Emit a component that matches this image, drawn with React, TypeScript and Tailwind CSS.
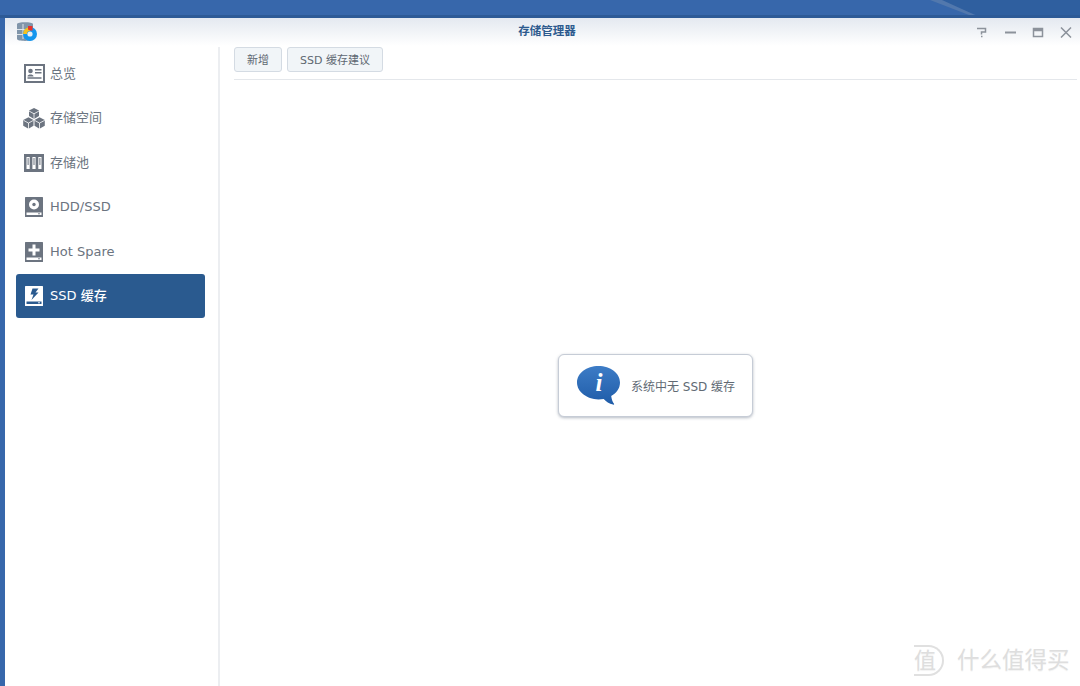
import type { ReactNode } from 'react'

const font = 'font-["DejaVu_Sans","Noto_Sans_CJK_SC",sans-serif]'

function OverviewIcon() {
  return (
    <svg width="21" height="19" viewBox="0 0 21 19">
      <path fillRule="evenodd" fill="#6c7480" d="M0 0h21v19H0zM2 2v15h17V2z" />
      <circle cx="6.500" cy="7" r="2.300" fill="#6c7480" />
      <path d="M3.500 12.500c0-2.600 6-2.600 6 0zM11 5h6.500v1.600H11zM11 8h6.500v1.600H11zM3.500 13.200h14v1.500h-14z" fill="#6c7480" />
    </svg>
  )
}

function CubesIcon() {
  return (
    <svg width="22" height="21" viewBox="0 0 22 21">
      <path fill="#6c7480" d="M11 0l5 2.600v5.500L11 11 6 8.100V2.600z" />
      <path fill="#6c7480" d="M5.500 9.200l5 2.800v5.700l-5 3-5.300-3V12zM16.500 9.200l5.300 2.800v5.700l-5.300 3-5-3V12z" />
      <path stroke="#fff" strokeWidth="0.800" fill="none" d="M6 3l5 2.800L16 3M11 5.800V11M.5 12.300l5 2.800 5-2.800M5.500 15v6M11.500 12.300l5 2.800 5.300-2.800M16.500 15v6" />
    </svg>
  )
}

function PoolIcon() {
  return (
    <svg width="20" height="18" viewBox="0 0 20 18">
      <path fill="#6c7480" d="M0 0h20v18H0z" />
      <path fill="#fff" d="M2.500 3h3.200v12H2.500zM8.400 3h3.200v12H8.400zM14.300 3h3.200v12h-3.200z" />
      <path fill="#6c7480" d="M3.600 4v7h1V4zM9.500 4v7h1V4zM15.400 4v7h1V4z" />
    </svg>
  )
}

function DiskIcon({ children, fill = '#6c7480', ink = '#fff' }: { children: ReactNode; fill?: string; ink?: string }) {
  return (
    <svg width="18" height="20" viewBox="0 0 18 20">
      <rect width="18" height="20" rx="0.500" fill={fill} />
      <path fill={ink} d="M1.500 15.500h15v2.500h-15z" />
      <circle cx="14" cy="16.700" r="0.800" fill={fill} />
      {children}
    </svg>
  )
}

function InfoBubble() {
  return (
    <svg width="44" height="39" viewBox="0 0 44 39">
      <defs>
        <linearGradient id="bubble" x1="0" y1="0" x2="0" y2="1">
          <stop offset="0" stopColor="#3d7cc6" />
          <stop offset="1" stopColor="#1f5ca8" />
        </linearGradient>
      </defs>
      <path
        fill="url(#bubble)"
        d="M21.500 0C33.500 0 43 7.200 43 16.500c0 5.800-3.400 10.500-8.800 13.400.3 2.800 1.300 5.800 2.800 7.800.4.800-.2 1.100-1 .9-3.600-.8-7.200-3-9.300-5.600-1.700.3-3.300.5-5.200.5C9.500 33 0 25.700 0 16.500S9.500 0 21.500 0z"
      />
      <text x="22" y="25" textAnchor="middle" fill="#fff" fontSize="25" fontWeight="700" fontStyle="italic" fontFamily="Liberation Serif, serif">
        i
      </text>
    </svg>
  )
}

function AppLogo() {
  return (
    <svg width="22" height="20" viewBox="0 0 22 20">
      <path fill="#8095aa" d="M1 2c0-2.500 16-2.500 16 0v15c0 2.500-16 2.500-16 0z" />
      <path stroke="#dfe5ea" strokeWidth="1" fill="none" d="M1 7.500h14M1 12.500h10M7 2v15" />
      <circle cx="14" cy="12" r="7" fill="#1496ee" />
      <path fill="#f4c020" d="M14 5a7 7 0 0 0-7 7h4a3 3 0 0 1 3-3z" />
      <path fill="#e5322d" d="M12 4h4.500v4.500H14l-2-1z" />
      <circle cx="14" cy="12" r="2.600" fill="#e8eef4" />
    </svg>
  )
}

const items: { label: string; icon: ReactNode; active?: boolean }[] = [
  { label: '总览', icon: <OverviewIcon /> },
  { label: '存储空间', icon: <CubesIcon /> },
  { label: '存储池', icon: <PoolIcon /> },
  {
    label: 'HDD/SSD',
    icon: (
      <DiskIcon>
        <circle cx="9" cy="7.500" r="5" fill="#fff" />
        <circle cx="9" cy="7.500" r="1.700" fill="#6c7480" />
      </DiskIcon>
    ),
  },
  {
    label: 'Hot Spare',
    icon: (
      <DiskIcon>
        <path fill="#fff" d="M7.500 2.500h3v4h4v3h-4v4h-3v-4h-4v-3h4z" />
      </DiskIcon>
    ),
  },
  {
    label: 'SSD 缓存',
    active: true,
    icon: (
      <DiskIcon fill="#fff" ink="#2a5a8f">
        <path fill="#2a5a8f" d="M7.500 2.500h6l-3 4h3l-7 7.500 2-5.500H5.500z" />
      </DiskIcon>
    ),
  },
]

export default function App() {
  return (
    <div className={`relative h-[686px] w-[1080px] overflow-hidden bg-[#3767ab] pl-[5px] pt-[18px] ${font}`}>
      {/* wallpaper streak */}
      <svg className="absolute left-[900px] top-0" width="180" height="18" viewBox="0 0 180 18">
        <path d="M38 0h142v15H76z" fill="#2f5f9f" />
        <path d="M30 0h12l33 15h-6z" fill="#5278ad" />
        <path d="M0 15h180v3H0z" fill="#2d5a96" />
      </svg>
      <div className="absolute left-0 top-[15px] h-[3px] w-[900px] bg-[#2d5a96]" />

      <div className="relative flex h-[668px] w-[1075px] flex-col bg-white">
        <div className="relative flex h-[28px] shrink-0 items-center justify-center bg-gradient-to-b from-[#e4e9f0] to-white pl-[9px]">
          <div className="absolute left-[11px] top-[4px]">
            <AppLogo />
          </div>
          <span className="text-[11.500px] font-bold text-[#2d5a8e]">存储管理器</span>
          <div className="absolute right-[7px] top-[9px] flex items-center gap-[14px]">
            <svg width="14" height="11" viewBox="0 0 14 11" fill="none" stroke="#8c929b" strokeWidth="1.500">
              <path d="M2 1.500h8.500v3.500H6.500v2.500M6 9.500h1.500" />
            </svg>
            <svg width="14" height="11" viewBox="0 0 14 11" fill="none" stroke="#8c929b" strokeWidth="2">
              <path d="M2 5.500h11" />
            </svg>
            <svg width="14" height="11" viewBox="0 0 14 11" fill="none" stroke="#8c929b" strokeWidth="1.500">
              <path d="M2.500 1.500h9v8h-9z" />
              <path d="M2.500 3h9" strokeWidth="2.500" />
            </svg>
            <svg width="14" height="11" viewBox="0 0 14 11" fill="none" stroke="#8c929b" strokeWidth="1.500">
              <path d="M2 0.500l10 10M12 0.500l-10 10" />
            </svg>
          </div>
        </div>

        <div className="flex min-h-0 flex-1">
          <nav className="mt-[1px] flex w-[215px] shrink-0 flex-col gap-[0.500px] border-r-2 border-[#eceef1] pl-[11px] pr-[13px] pt-[4px]">
            {items.map((item) => (
              <div
                key={item.label}
                className={`flex h-[44px] shrink-0 items-center rounded-[3px] pt-[1px] text-[13px] ${
                  item.active ? 'bg-[#2a5a8f] font-medium text-white' : 'text-[#6b7480]'
                }`}
              >
                <span className="flex w-[34px] shrink-0 justify-center pl-[2px]">{item.icon}</span>
                {item.label}
              </div>
            ))}
          </nav>

          <main className="flex min-w-0 flex-1 flex-col pl-[14px] pr-[3px] pt-[1px]">
            <div className="flex shrink-0 gap-[5px] border-b border-[#e4e7eb] pb-[7px]">
              <button className="h-[25px] w-[48px] rounded-[3px] border border-[#d4dbe3] bg-[#f1f5f8] pt-[3px] text-[11px] text-[#5f6872]">
                新增
              </button>
              <button className="h-[25px] w-[96px] rounded-[3px] border border-[#d4dbe3] bg-[#f1f5f8] pt-[3px] text-[11px] text-[#5f6872]">
                SSD 缓存建议
              </button>
            </div>
            <div className="flex flex-1 items-start justify-center pt-[274px]">
              <div className="flex h-[63px] w-[195px] items-center gap-[10px] rounded-[6px] border border-[#c6ccd6] bg-white pl-[18px] shadow-[0_1px_3px_rgba(90,105,125,0.45)]">
                <InfoBubble />
                <span className="whitespace-nowrap pt-[2px] text-[12px] text-[#616a74]">系统中无 SSD 缓存</span>
              </div>
            </div>
          </main>
        </div>
      </div>

      {/* watermark */}
      <div className="absolute left-[914px] top-[645px] flex items-center gap-[13px] text-[#dedede] [text-shadow:0_1px_1px_#f2f2f2]">
        <span className="flex h-[31px] w-[30px] items-center rounded-r-full border-2 border-l-0 border-[#e0e0e0] text-[22px]">值</span>
        <span className="text-[22.500px] leading-none">什么值得买</span>
      </div>
    </div>
  )
}
